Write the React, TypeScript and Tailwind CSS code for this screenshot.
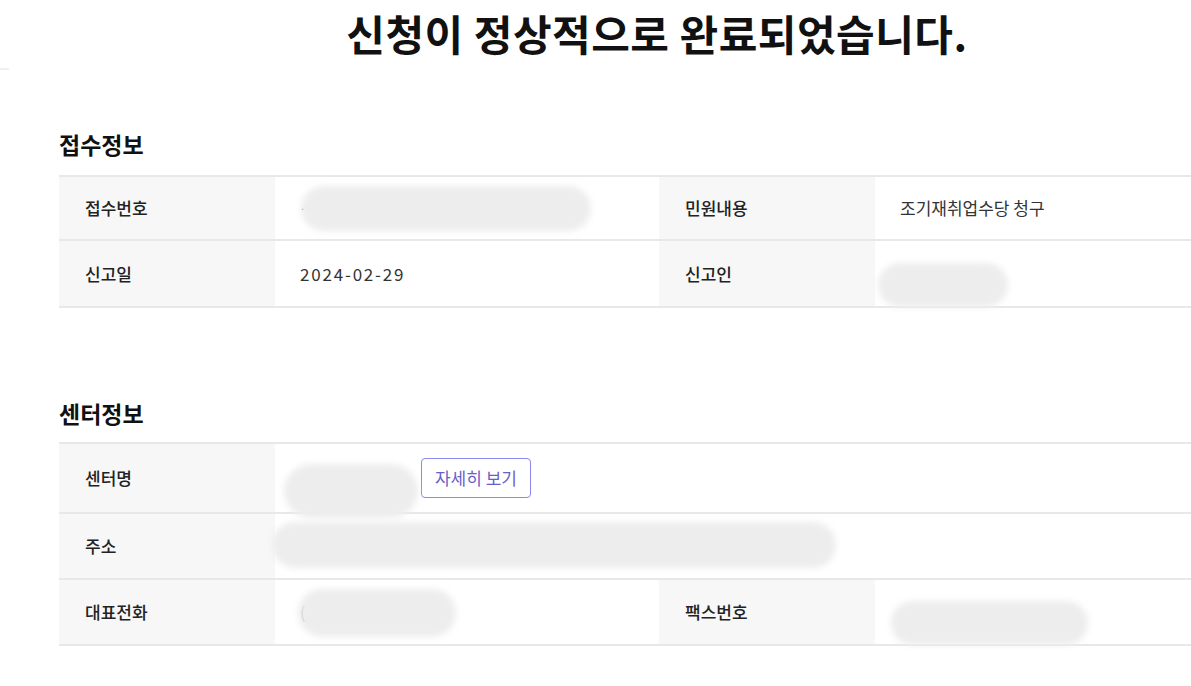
import React from "react";

const font = { fontFamily: '"Noto Sans CJK KR", "Noto Sans", sans-serif' };

function Blob({ className }: { className: string }) {
  return <div className={"rounded-full bg-[#ededed] blur-[3px] " + className} />;
}

function Label({ children }: { children: React.ReactNode }) {
  return (
    <div className="w-[216px] shrink-0 bg-[#f7f7f7] pl-[26px] flex items-center text-[17px] font-medium text-[#222]">
      {children}
    </div>
  );
}

function Value({ children, className = "" }: { children?: React.ReactNode; className?: string }) {
  return (
    <div className={"flex items-center pl-[25px] text-[17px] text-[#333] " + className}>{children}</div>
  );
}

export default function App() {
  return (
    <div className="w-[1191px] h-[686px] overflow-hidden bg-white relative" style={font}>
      <div className="absolute left-0 top-[68px] w-[9px] h-[2px] bg-[#f0f0f0]" />
      <div className="w-[1196px] ml-[59px]">
        <h1 className="text-center text-[42px] font-bold text-[#111] leading-none pt-[12px] tracking-[0.5px]">
          신청이 정상적으로 완료되었습니다.
        </h1>

        <h2 className="mt-[79px] text-[23px] font-bold text-[#111] leading-none">접수정보</h2>
        <div className="mt-[19px] border-t-2 border-[#e8e8e8]">
          <div className="flex h-[64px] border-b-2 border-[#e8e8e8]">
            <Label>접수번호</Label>
            <Value className="w-[384px] relative">
              <span className="text-[10px]">·</span>
              <Blob className="absolute left-[26px] top-[9px] w-[290px] h-[45px]" />
            </Value>
            <Label>민원내용</Label>
            <Value className="flex-1">조기재취업수당 청구</Value>
          </div>
          <div className="flex h-[67px] border-b-2 border-[#e8e8e8]">
            <Label>신고일</Label>
            <Value className="w-[384px] tracking-[1.8px]">2024-02-29</Value>
            <Label>신고인</Label>
            <Value className="flex-1 relative">
              <Blob className="absolute left-[3px] top-[22px] w-[130px] h-[44px]" />
            </Value>
          </div>
        </div>

        <h2 className="mt-[94px] text-[23px] font-bold text-[#111] leading-none">센터정보</h2>
        <div className="mt-[17px] border-t-2 border-[#e8e8e8]">
          <div className="flex h-[70px] border-b-2 border-[#e8e8e8]">
            <Label>센터명</Label>
            <Value className="flex-1 relative">
              <span className="ml-[55px] text-[#ccc] text-[13px]">센터</span>
              <Blob className="absolute left-[9px] top-[20px] w-[134px] h-[54px]" />
              <button className="ml-[42px] h-[40px] px-[13px] rounded-[4px] border border-[#8a8ae8] text-[#6860c8] text-[17px] bg-white">
                자세히 보기
              </button>
            </Value>
          </div>
          <div className="flex h-[66px] border-b-2 border-[#e8e8e8]">
            <Label>주소</Label>
            <Value className="flex-1 relative">
              <Blob className="absolute left-[-3px] top-[8px] w-[564px] h-[46px]" />
            </Value>
          </div>
          <div className="flex h-[66px] border-b-2 border-[#e8e8e8]">
            <Label>대표전화</Label>
            <Value className="w-[384px] relative">
              <span>(</span>
              <Blob className="absolute left-[23px] top-[9px] w-[158px] h-[48px]" />
            </Value>
            <Label>팩스번호</Label>
            <Value className="flex-1 relative">
              <Blob className="absolute left-[16px] top-[21px] w-[197px] h-[44px]" />
            </Value>
          </div>
        </div>
      </div>
    </div>
  );
}
